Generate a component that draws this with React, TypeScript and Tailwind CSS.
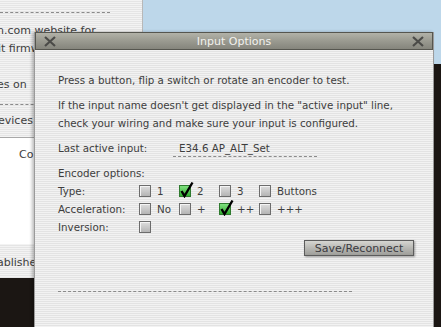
import React from "react";

const font = { fontFamily: '"DejaVu Sans", Verdana, sans-serif' };

function CloseX() {
  return (
    <svg width="12" height="11" viewBox="0 0 12 11" className="text-[#4b4b48]">
      <path d="M1 1 L11 10 M11 1 L1 10" stroke="currentColor" strokeWidth="2.2" fill="none" />
    </svg>
  );
}

function Box({ checked }: { checked?: boolean }) {
  return (
    <span
      className={
        checked
          ? "relative inline-block h-[12px] w-[12px] shrink-0 border border-[#2f7a2f] bg-gradient-to-b from-[#7ee07e] to-[#2fae2f]"
          : "relative inline-block h-[12px] w-[12px] shrink-0 border border-[#6c6c6c] bg-gradient-to-b from-[#dedede] to-[#b4b4b4] shadow-[inset_1px_1px_0_#f4f4f4]"
      }
    >
      {checked && (
        <svg width="14" height="17" viewBox="0 0 14 17" className="absolute -top-[5px] left-0">
          <path d="M1.5 10 L4.5 15 L12.5 1.5" stroke="#000" strokeWidth="2.4" fill="none" />
        </svg>
      )}
    </span>
  );
}

function Opt({ checked, label }: { checked?: boolean; label: string }) {
  return (
    <div className="flex items-center gap-[6px]">
      <Box checked={checked} />
      <span>{label}</span>
    </div>
  );
}

export default function App() {
  return (
    <div className="relative h-[327px] w-[441px] overflow-hidden bg-[#1b1613]" style={font}>
      {/* desktop sky */}
      <div className="absolute left-0 top-0 h-[64px] w-[441px] bg-[#bdd7ea]" />

      {/* background window */}
      <div className="absolute left-0 top-0 flex h-[278px] w-[143px] flex-col overflow-hidden border-r border-[#b8b8b8] bg-[repeating-linear-gradient(to_bottom,#f3f3f3_0px,#f3f3f3_1px,#e5e5e5_1px,#e5e5e5_2px)] text-[11px] text-[#3e3e3e]">
        <div className="mt-[12px] w-[110px] border-b border-dashed border-[#8a8a8a]" />
        <div className="mt-[11px] -ml-[3px] whitespace-nowrap leading-[14px]">n.com website for</div>
        <div className="mt-[4px] -ml-[2px] whitespace-nowrap leading-[14px]">it firmware</div>
        <div className="mt-[22px] -ml-[3px] whitespace-nowrap leading-[14px]">es on</div>
        <div className="mt-[12px] w-[110px] border-b border-dashed border-[#8a8a8a]" />
        <div className="mt-[9px] -ml-[2px] whitespace-nowrap leading-[14px]">evices</div>
        <div className="mt-[9px] flex h-[107px] flex-col border-t border-[#a8a8a8] bg-white">
          <div className="ml-[19px] mt-[10px] leading-[14px]">Co</div>
        </div>
        <div className="mt-[12px] -ml-[3px] whitespace-nowrap leading-[14px]">ablished</div>
      </div>

      {/* dialog */}
      <div className="absolute left-[34px] top-[32px] flex h-[300px] w-[400px] flex-col border-x border-[#9a9a9a] bg-[repeating-linear-gradient(to_bottom,#f2f2f2_0px,#f2f2f2_1px,#e3e3e3_1px,#e3e3e3_2px)] shadow-[-2px_0_3px_rgba(0,0,0,0.25)]">
        <div className="flex h-[18px] items-center justify-between border border-[#56564f] bg-gradient-to-b from-[#b2b2a8] via-[#9a9a90] to-[#85857c] px-[8px]">
          <CloseX />
          <span className="text-[11px] leading-none text-[#f2f2ee]">Input Options</span>
          <CloseX />
        </div>

        <div className="flex flex-col pl-[23px] pr-[19px] text-[10.3px] leading-[18px] text-[#3d3d3d]">
          <p className="mt-[21px] whitespace-nowrap">Press a button, flip a switch or rotate an encoder to test.</p>
          <p className="mt-[7px] whitespace-nowrap">If the input name doesn't get displayed in the "active input" line,</p>
          <p className="whitespace-nowrap">check your wiring and make sure your input is configured.</p>

          <div className="mt-[7px] flex items-center">
            <span className="w-[115px]">Last active input:</span>
            <span className="w-[144px] border-b border-dashed border-[#8c8c8c] pl-[6px] leading-[16px]">E34.6 AP_ALT_Set</span>
          </div>

          <p className="mt-[7px]">Encoder options:</p>
          <div className="grid grid-cols-[81px_40px_40px_40px_60px] items-center">
            <span>Type:</span>
            <Opt label="1" />
            <Opt label="2" checked />
            <Opt label="3" />
            <Opt label="Buttons" />
            <span>Acceleration:</span>
            <Opt label="No" />
            <Opt label="+" />
            <Opt label="++" checked />
            <Opt label="+++" />
            <span>Inversion:</span>
            <Box />
          </div>

          <div className="mt-[4px] flex justify-end">
            <button className="h-[16px] w-[110px] border border-[#5c5c5c] bg-gradient-to-b from-[#d6d6d2] via-[#b8b8b4] to-[#9e9e9a] text-[11px] leading-none text-[#3a3a40] shadow-[1px_1px_2px_rgba(0,0,0,0.35)]">
              Save/Reconnect
            </button>
          </div>

          <div className="mt-[35px] w-[294px] border-b border-dashed border-[#8a8a8a]" />
        </div>
      </div>
    </div>
  );
}
